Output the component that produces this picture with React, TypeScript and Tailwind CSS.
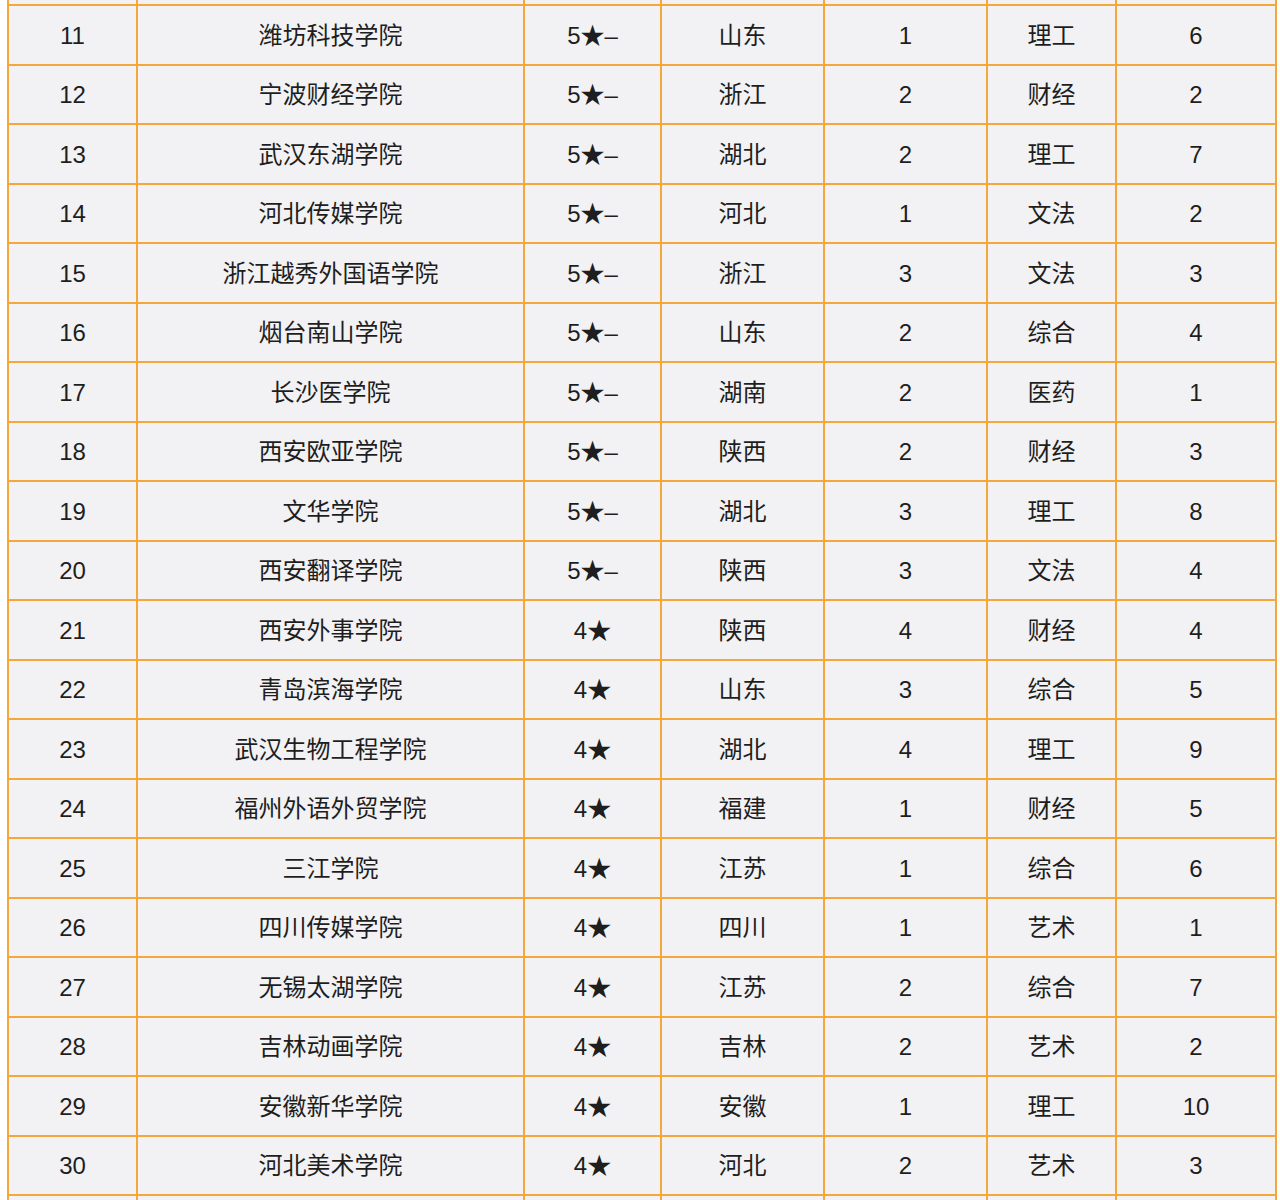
import React from 'react';

const rows: [number, string, string, string, number, string, number][] = [
  [11, '潍坊科技学院', '5★–', '山东', 1, '理工', 6],
  [12, '宁波财经学院', '5★–', '浙江', 2, '财经', 2],
  [13, '武汉东湖学院', '5★–', '湖北', 2, '理工', 7],
  [14, '河北传媒学院', '5★–', '河北', 1, '文法', 2],
  [15, '浙江越秀外国语学院', '5★–', '浙江', 3, '文法', 3],
  [16, '烟台南山学院', '5★–', '山东', 2, '综合', 4],
  [17, '长沙医学院', '5★–', '湖南', 2, '医药', 1],
  [18, '西安欧亚学院', '5★–', '陕西', 2, '财经', 3],
  [19, '文华学院', '5★–', '湖北', 3, '理工', 8],
  [20, '西安翻译学院', '5★–', '陕西', 3, '文法', 4],
  [21, '西安外事学院', '4★', '陕西', 4, '财经', 4],
  [22, '青岛滨海学院', '4★', '山东', 3, '综合', 5],
  [23, '武汉生物工程学院', '4★', '湖北', 4, '理工', 9],
  [24, '福州外语外贸学院', '4★', '福建', 1, '财经', 5],
  [25, '三江学院', '4★', '江苏', 1, '综合', 6],
  [26, '四川传媒学院', '4★', '四川', 1, '艺术', 1],
  [27, '无锡太湖学院', '4★', '江苏', 2, '综合', 7],
  [28, '吉林动画学院', '4★', '吉林', 2, '艺术', 2],
  [29, '安徽新华学院', '4★', '安徽', 1, '理工', 10],
  [30, '河北美术学院', '4★', '河北', 2, '艺术', 3],
];

const cell = 'flex items-center justify-center pt-[2px] border-r-2 border-b-2 border-[#f4a73b] bg-[#f2f2f4]';

const App: React.FC = () => {
  return (
    <div className="w-[1280px] h-[1200px] overflow-hidden bg-white font-['Liberation_Sans','Noto_Sans_CJK_SC',sans-serif] text-[24px] text-[#1e1e1e]">
      <div className="ml-[7px] -mt-[55.5px] w-[1270px] grid grid-cols-[129px_387px_137px_163px_163px_129px_160px] auto-rows-[59.5px] border-t-2 border-l-2 border-[#f4a73b]">
        {/* rows cut off above and below the screenshot */}
        {Array.from({ length: 7 }).map((_, i) => (
          <div key={`top-${i}`} className={cell} />
        ))}
        {rows.map((r) =>
          r.map((v, i) => (
            <div key={`${r[0]}-${i}`} className={cell}>
              {v}
            </div>
          ))
        )}
        {Array.from({ length: 7 }).map((_, i) => (
          <div key={`bottom-${i}`} className={cell} />
        ))}
      </div>
    </div>
  );
};

export default App;
